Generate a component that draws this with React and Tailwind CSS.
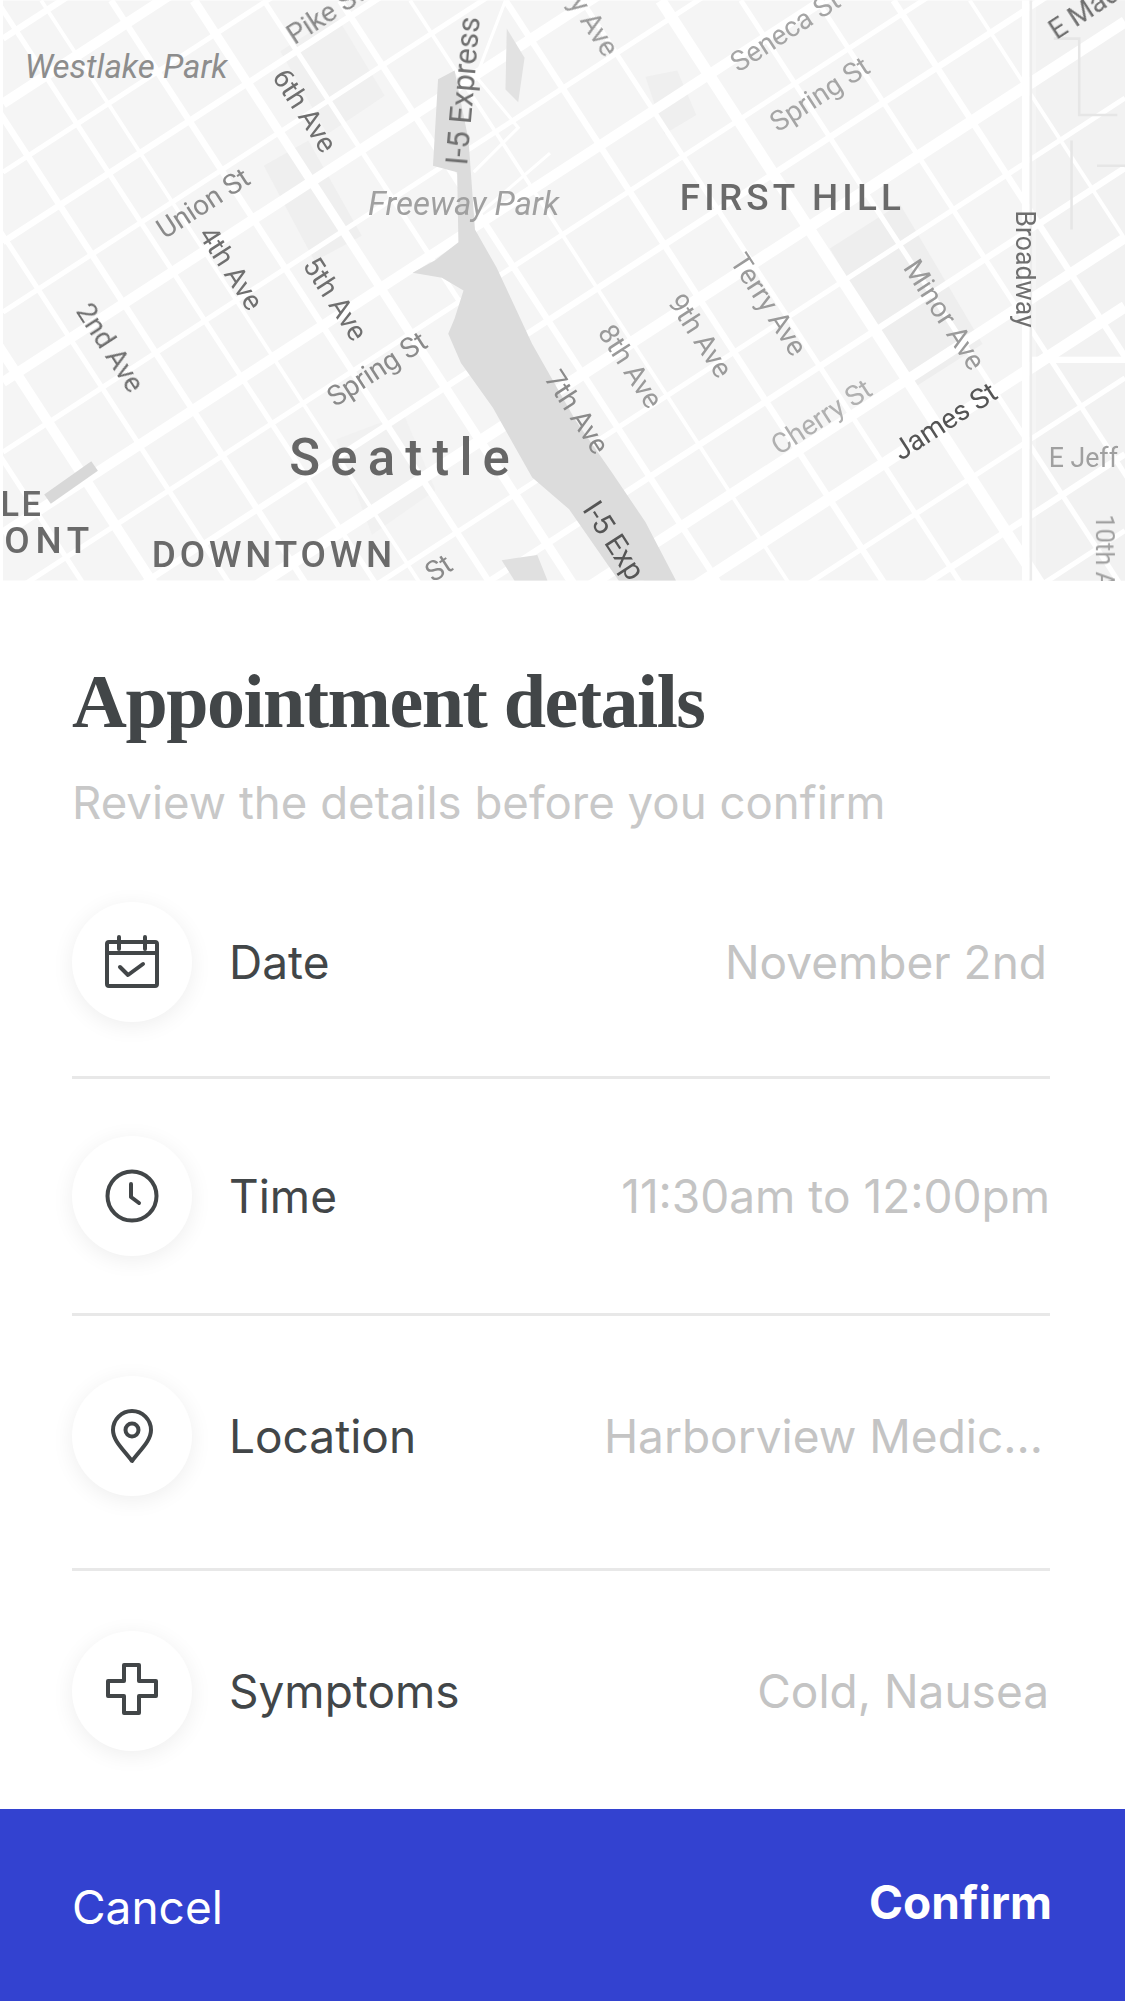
// map street grid, offsets in the 882x456 map drawing
const aves = [
  [-420, 4], [-360, 4], [-300, 5], [-235, 4], [-180, 8], [-120, 4], [-60, 5], [-5, 4], [30, 3], [85, 5], [150, 7], [205, 4],
  [265, 5], [320, 3], [395, 5], [455, 4], [517, 9], [580, 4], [640, 4], [700, 5], [760, 3],
];
const streets = [
  [30, 5], [81, 8], [135, 4], [190, 5], [245, 4], [300, 8], [355, 4], [419, 8], [470, 4], [530, 5], [590, 9],
  [650, 4], [705, 5], [760, 8], [814, 9], [870, 4], [930, 5], [990, 4], [1050, 6],
];

const mapLabels = [
  { t: 'Westlake Park', x: 17, y: 61, size: 26, fill: '#8d8d8d', italic: true },
  { t: 'Pike St', x: 229, y: 35, r: -33, size: 22, fill: '#8a8a8a' },
  { t: '6th Ave', x: 211, y: 60, r: 57, size: 22, fill: '#6f6f6f' },
  { t: 'I-5 Express', x: 365, y: 130, r: -85, size: 24, fill: '#6f6f6f' },
  { t: 'ry Ave', x: 440, y: -4, r: 57, size: 22, fill: '#9a9a9a' },
  { t: 'Seneca St', x: 578, y: 57, r: -33, size: 22, fill: '#a5a5a5' },
  { t: 'Spring St', x: 609, y: 104, r: -33, size: 22, fill: '#a5a5a5' },
  { t: 'E Mad', x: 828, y: 31, r: -33, size: 22, fill: '#6f6f6f' },
  { t: 'FIRST HILL', x: 532, y: 165, size: 29, fill: '#6a6a6a', weight: 500, spacing: 3.3 },
  { t: 'Freeway Park', x: 287, y: 169, size: 26, fill: '#a0a0a0', italic: true },
  { t: 'Union St', x: 127, y: 188, r: -33, size: 22, fill: '#8a8a8a' },
  { t: '4th Ave', x: 153, y: 184, r: 57, size: 22, fill: '#6f6f6f' },
  { t: '5th Ave', x: 235, y: 208, r: 57, size: 22, fill: '#6f6f6f' },
  { t: '2nd Ave', x: 57, y: 244, r: 57, size: 22, fill: '#6f6f6f' },
  { t: 'Spring St', x: 261, y: 320, r: -33, size: 22, fill: '#8a8a8a' },
  { t: 'Seattle', x: 225, y: 373, size: 40, fill: '#666666', weight: 500, spacing: 8 },
  { t: '7th Ave', x: 425, y: 297, r: 57, size: 22, fill: '#8a8a8a' },
  { t: '8th Ave', x: 467, y: 261, r: 57, size: 22, fill: '#9a9a9a' },
  { t: '9th Ave', x: 522, y: 237, r: 57, size: 22, fill: '#9a9a9a' },
  { t: 'Terry Ave', x: 571, y: 205, r: 57, size: 22, fill: '#9a9a9a' },
  { t: 'Minor Ave', x: 707, y: 210, r: 57, size: 22, fill: '#9a9a9a' },
  { t: 'Cherry St', x: 610, y: 358, r: -33, size: 22, fill: '#b0b0b0' },
  { t: 'James St', x: 706, y: 362, r: -33, size: 22, fill: '#555555' },
  { t: 'Broadway', x: 796, y: 165, r: 90, size: 21, fill: '#6f6f6f' },
  { t: 'E Jeff', x: 822, y: 367, size: 21, fill: '#a0a0a0' },
  { t: '10th A', x: 859, y: 404, r: 90, size: 20, fill: '#a0a0a0' },
  { t: 'LE', x: -2, y: 405, size: 27, fill: '#6a6a6a', weight: 500, spacing: 2 },
  { t: 'ONT', x: 1, y: 434, size: 29, fill: '#6a6a6a', weight: 500, spacing: 4.5 },
  { t: 'DOWNTOWN', x: 117, y: 445, size: 29, fill: '#6a6a6a', weight: 500, spacing: 3 },
  { t: 'I-5 Exp', x: 455, y: 400, r: 57, size: 23, fill: '#555555' },
  { t: 'St', x: 338, y: 458, r: -33, size: 22, fill: '#8a8a8a' },
];

const MapBackdrop = () => (
  <svg viewBox="0 0 882 456" className="w-full h-full block blur-[0.6px]" style={{ fontFamily: 'Roboto, sans-serif' }}>
    <rect width="882" height="456" fill="#f5f5f5" />
    {/* darker blocks */}
    <polygon points="218,40 262,12 300,75 255,105" fill="#f0f0f0" />
    <polygon points="205,130 240,110 282,185 245,205" fill="#efefef" />
    <polygon points="650,195 705,160 770,270 715,305" fill="#eeeeee" />
    <polygon points="505,60 530,55 545,90 520,105" fill="#efefef" />
    <polygon points="262,345 315,325 340,385 290,420" fill="#f1f1f1" />
    <polygon points="812,0 882,0 882,456 812,456" fill="#f2f2f2" />
    {aves.map(([x0, w]) => (
      <line key={x0} x1={x0} y1="0" x2={x0 + 702 * 0.65} y2="702" stroke="#ffffff" strokeWidth={w} />
    ))}
    {streets.map(([y0, w]) => (
      <line key={y0} x1="0" y1={y0} x2="882" y2={y0 - 882 * 0.65} stroke="#ffffff" strokeWidth={w} />
    ))}
    {/* freeway */}
    <polygon
      points="342,62 355,55 366,110 371,180 388,210 416,270 450,330 478,370 505,410 529,456 484,456 445,400 416,375 385,320 360,285 350,262 355,250 362,228 345,218 322,214 340,204 358,190 357,135 338,130"
      fill="#dcdcdc"
    />
    <polygon points="396,22 410,45 405,80 395,70" fill="#e2e2e2" />
    <path d="M395 0 L372 60 L405 100 L370 135 M372 170 L430 120" stroke="#ffffff" strokeWidth="2.5" fill="none" />
    <path d="M72 366 L35 392" stroke="#d8d8d8" strokeWidth="9" />
    <polygon points="392,440 420,436 428,456 402,456" fill="#e0e0e0" />
    {/* right side beyond Broadway */}
    <rect x="801" width="6" height="456" fill="#ffffff" />
    <rect x="807" width="2" height="456" fill="#ececec" />
    <rect x="809" y="280" width="73" height="5" fill="#ffffff" />
    <path d="M826 30 h20 v60 h30 M840 110 v70 M860 130 h22" stroke="#e6e6e6" strokeWidth="2" fill="none" />
    {mapLabels.map((l) => (
      <text
        key={l.t + l.x}
        x={l.x}
        y={l.y}
        transform={l.r ? `rotate(${l.r} ${l.x} ${l.y})` : undefined}
        fontSize={l.size}
        fill={l.fill}
        fontStyle={l.italic ? 'italic' : undefined}
        fontWeight={l.weight}
        letterSpacing={l.spacing}
      >
        {l.t}
      </text>
    ))}
  </svg>
);

const CalendarIcon = () => (
  <svg width="56" height="56" viewBox="0 0 56 56" fill="none" stroke="currentColor" strokeWidth="4" strokeLinecap="round" strokeLinejoin="round">
    <rect x="3" y="8" width="50" height="44" rx="2" />
    <path d="M3 19h50M15 3v12M41 3v12" />
    <path d="M16 33l8 8 15-11" />
  </svg>
);

const ClockIcon = () => (
  <svg width="56" height="56" viewBox="0 0 56 56" fill="none" stroke="currentColor" strokeWidth="4" strokeLinecap="round" strokeLinejoin="round">
    <circle cx="28" cy="28" r="24.5" />
    <path d="M27 16v13l8 6" />
  </svg>
);

const PinIcon = () => (
  <svg width="44" height="56" viewBox="0 0 44 56" fill="none" stroke="currentColor" strokeWidth="4" strokeLinejoin="round">
    <path d="M22 53C14 42 3 33 3 22a19 19 0 0 1 38 0c0 11-11 20-19 31z" />
    <circle cx="22" cy="22" r="6.5" />
  </svg>
);

const PlusIcon = () => (
  <svg width="52" height="52" viewBox="0 0 52 52" fill="none" stroke="currentColor" strokeWidth="4" strokeLinejoin="round" className="-translate-y-0.5">
    <path d="M18 2h15v16h17v15H33v17H18V33H2V18h16z" />
  </svg>
);

const rows = [
  { label: 'Date', value: 'November 2nd', icon: <CalendarIcon />, pad: 'pb-[54px]', valuePad: 'pr-[3px]' },
  { label: 'Time', value: '11:30am to 12:00pm', icon: <ClockIcon />, pad: 'pt-[57px] pb-[57px]', valuePad: '' },
  { label: 'Location', value: 'Harborview Medic...', icon: <PinIcon />, pad: 'pt-[60px] pb-[72px]', valuePad: 'pr-[7px]' },
  { label: 'Symptoms', value: 'Cold, Nausea', icon: <PlusIcon />, pad: 'pt-[60px]', valuePad: 'pr-[1px]' },
];

const App = () => {
  return (
    <div className="w-[1125px] h-[2001px] bg-white flex flex-col overflow-hidden text-[#424648] font-['Inter',sans-serif]">
      <div className="h-[581px] pl-[3px] shrink-0">
        <MapBackdrop />
      </div>

      <div className="flex-1 pl-[72px] pr-[75px] pt-[78px]">
        <h1 className="font-['Liberation_Serif',serif] font-bold text-[76px] leading-[84px] tracking-[-1.5px]">
          Appointment details
        </h1>
        <p className="mt-[33px] text-[45.6px] leading-[54px] text-[#c8c8c8]">Review the details before you confirm</p>

        <div className="mt-[72px]">
          {rows.map((row, i) => (
            <div key={row.label} className={i < rows.length - 1 ? 'border-b-[3px] border-[#e8e8e8]' : ''}>
              <div className={`flex items-center ${row.pad}`}>
                <div className="w-[120px] h-[120px] rounded-full bg-white shadow-[0_4px_22px_rgba(0,0,0,0.07)] flex items-center justify-center shrink-0">
                  {row.icon}
                </div>
                <span className="ml-[37px] text-[46px]">{row.label}</span>
                <span className={`ml-auto text-[46px] text-[#c4c4c4] ${row.valuePad}`}>{row.value}</span>
              </div>
            </div>
          ))}
        </div>
      </div>

      <div className="h-[192px] bg-[#3342d0] pl-[72px] pr-[73px] flex items-center justify-between text-white shrink-0">
        <span className="text-[46px] translate-y-0.5">Cancel</span>
        <span className="text-[46px] font-bold -translate-y-[3px]">Confirm</span>
      </div>
    </div>
  );
};

export default App;
